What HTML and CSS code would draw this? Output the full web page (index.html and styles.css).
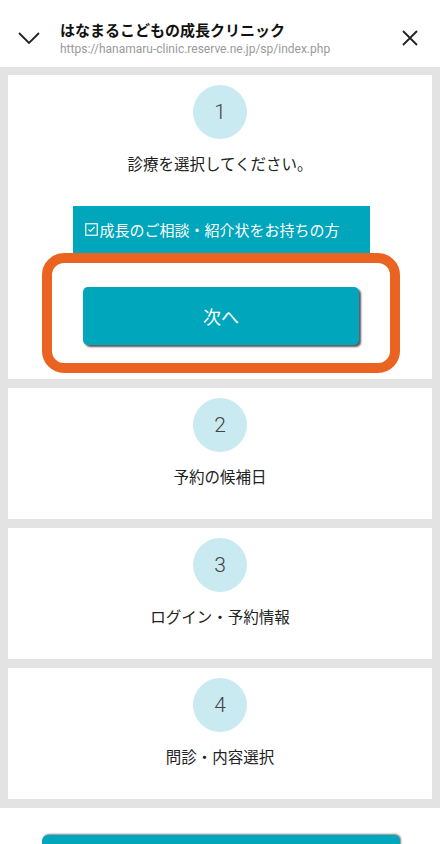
FILE: index.html
```html
<!DOCTYPE html>
<html lang="ja">
<head>
  <meta charset="UTF-8" />
  <title>はなまるこどもの成長クリニック</title>
  <link rel="stylesheet" href="styles.css">
</head>
<body>

  <!-- Browser sheet header -->
  <header class="sheet-header">
    <svg class="icon-down" width="22" height="12" viewBox="0 0 22 12">
      <polyline points="1,1 11,11 21,1" fill="none" stroke="#222" stroke-width="1.8" />
    </svg>
    <div class="sheet-title">
      <div class="site-name">はなまるこどもの成長クリニック</div>
      <div class="site-url">https://hanamaru-clinic.reserve.ne.jp/sp/index.php</div>
    </div>
    <svg class="icon-close" width="16" height="16" viewBox="0 0 16 16">
      <path d="M1 1 L15 15 M15 1 L1 15" stroke="#222" stroke-width="1.8" />
    </svg>
  </header>

  <main class="steps">
    <section class="step">
      <div class="step-num">1</div>
      <p class="step-label">診療を選択してください。</p>
      <div class="menu-item">
        <svg class="check" width="13" height="13" viewBox="0 0 13 13">
          <rect x="0.75" y="0.75" width="11.5" height="11.5" fill="none" stroke="#fff" stroke-width="1.2" />
          <polyline points="3.5,6.5 5.5,8.5 9.5,4" fill="none" stroke="#fff" stroke-width="1.2" />
        </svg>
        成長のご相談・紹介状をお持ちの方
      </div>
      <div class="highlight">
        <a class="next-btn" href="#">次へ</a>
      </div>
    </section>

    <section class="step">
      <div class="step-num">2</div>
      <p class="step-label">予約の候補日</p>
    </section>

    <section class="step">
      <div class="step-num">3</div>
      <p class="step-label">ログイン・予約情報</p>
    </section>

    <section class="step">
      <div class="step-num">4</div>
      <p class="step-label">問診・内容選択</p>
    </section>
  </main>

  <footer class="bottom-bar">
    <div class="bottom-btn"></div>
  </footer>

</body>
</html>
```

FILE: styles.css
```css
body {
  margin: 0;
  font-family: Roboto, "Noto Sans CJK JP", sans-serif;
  color: #222;
  background: #fff;
  overflow: hidden;
}

.sheet-header {
  display: flex;
  align-items: center;
  height: 67px;
  padding: 0 22px 0 18px;
  box-sizing: border-box;
  background: #fff;
}

.icon-down {
  margin-top: 9px;
  flex-shrink: 0;
}

.sheet-title {
  flex: 1;
  margin-left: 20px;
  margin-top: 9px;
}

.site-name {
  font-family: "Noto Sans CJK JP", sans-serif;
  font-size: 15px;
  font-weight: 700;
  line-height: 18px;
  color: #111;
}

.site-url {
  margin-top: 3px;
  font-size: 12px;
  line-height: 14px;
  color: #9a9a9a;
}

.icon-close {
  margin-top: 8px;
  flex-shrink: 0;
}

/* Steps */
.steps {
  display: flex;
  flex-direction: column;
  gap: 9px;
  background: #e3e3e3;
  padding: 8px 8px 9px;
}

.step {
  background: #fff;
  display: flex;
  flex-direction: column;
  align-items: center;
  padding: 10px 0 33px;
}

.step-num {
  width: 54px;
  height: 54px;
  border-radius: 50%;
  background: #c9eaf0;
  display: flex;
  align-items: center;
  justify-content: center;
  font-size: 21px;
  font-weight: 300;
  color: #444;
}

.step-label {
  margin: 14px 0 0;
  font-family: "Noto Sans CJK JP", sans-serif;
  font-size: 15.5px;
  line-height: 20px;
  color: #222;
}

.step:first-child {
  padding-bottom: 6px;
}

.menu-item {
  margin-top: 33px;
  width: 297px;
  height: 47px;
  box-sizing: border-box;
  padding: 0 12px;
  background: #00a6bb;
  color: #fff;
  font-family: "Noto Sans CJK JP", sans-serif;
  font-size: 15px;
  display: flex;
  align-items: center;
  gap: 2px;
  margin-left: 2px;
}

.menu-item .check {
  flex-shrink: 0;
}

.highlight {
  width: 358px;
  box-sizing: border-box;
  border: 10px solid #eb6321;
  border-radius: 22px;
  background: #fff;
  padding: 24px 31px 18px;
  margin-left: 2px;
}

.next-btn {
  display: flex;
  align-items: center;
  justify-content: center;
  height: 58px;
  background: #00a6bb;
  border-radius: 5px;
  box-shadow: 2px 2px 2px rgba(0, 0, 0, 0.65);
  color: #fff;
  font-family: "Noto Sans CJK JP", sans-serif;
  font-size: 18px;
  text-decoration: none;
}

.bottom-bar {
  background: #fff;
  padding-top: 27px;
  display: flex;
  justify-content: center;
}

.bottom-btn {
  width: 358px;
  height: 50px;
  background: #00a6bb;
  border-radius: 6px 6px 0 0;
  box-shadow: 1px -1px 2px rgba(0, 0, 0, 0.5);
  margin-left: 2px;
}
```
